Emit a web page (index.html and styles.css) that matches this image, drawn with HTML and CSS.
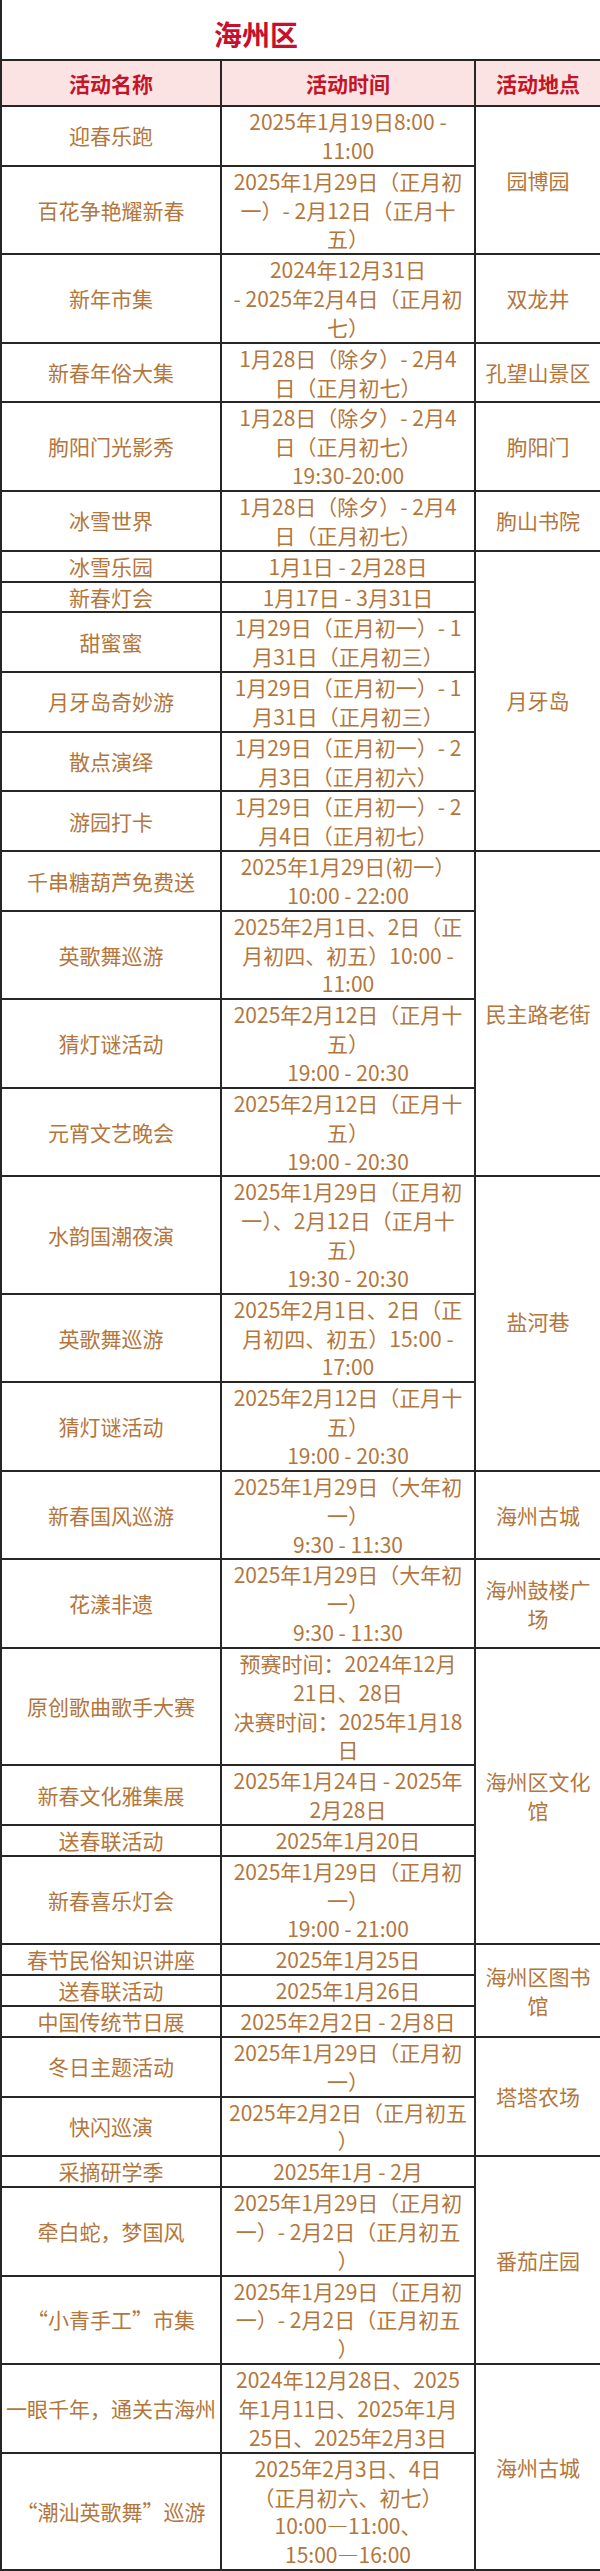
FILE: index.html
```html
<!DOCTYPE html>
<html lang="zh-CN">
<head>
<meta charset="utf-8">
<title>海州区</title>
<link rel="stylesheet" href="styles.css">
</head>
<body>
<table class="sched">
  <colgroup><col class="c-name"><col class="c-time"><col class="c-place"></colgroup>
  <tr class="title-row"><td colspan="3"><div class="title">海州区</div></td></tr>
  <tr class="head-row"><th>活动名称</th><th>活动时间</th><th>活动地点</th></tr>
  <tr><td>迎春乐跑</td><td>2025年1月19日8:00 -<br>11:00</td><td rowspan="2">园博园</td></tr>
  <tr><td>百花争艳耀新春</td><td>2025年1月29日（正月初<br>一）- 2月12日（正月十<br>五）</td></tr>
  <tr><td>新年市集</td><td>2024年12月31日<br>- 2025年2月4日（正月初<br>七）</td><td>双龙井</td></tr>
  <tr><td>新春年俗大集</td><td>1月28日（除夕）- 2月4<br>日（正月初七）</td><td>孔望山景区</td></tr>
  <tr><td>朐阳门光影秀</td><td>1月28日（除夕）- 2月4<br>日（正月初七）<br>19:30-20:00</td><td>朐阳门</td></tr>
  <tr><td>冰雪世界</td><td>1月28日（除夕）- 2月4<br>日（正月初七）</td><td>朐山书院</td></tr>
  <tr><td>冰雪乐园</td><td>1月1日 - 2月28日</td><td rowspan="6">月牙岛</td></tr>
  <tr><td>新春灯会</td><td>1月17日 - 3月31日</td></tr>
  <tr><td>甜蜜蜜</td><td>1月29日（正月初一）- 1<br>月31日（正月初三）</td></tr>
  <tr><td>月牙岛奇妙游</td><td>1月29日（正月初一）- 1<br>月31日（正月初三）</td></tr>
  <tr><td>散点演绎</td><td>1月29日（正月初一）- 2<br>月3日（正月初六）</td></tr>
  <tr><td>游园打卡</td><td>1月29日（正月初一）- 2<br>月4日（正月初七）</td></tr>
  <tr><td>千串糖葫芦免费送</td><td>2025年1月29日(初一）<br>10:00 - 22:00</td><td rowspan="4">民主路老街</td></tr>
  <tr><td>英歌舞巡游</td><td>2025年2月1日、2日（正<br>月初四、初五）10:00 -<br>11:00</td></tr>
  <tr><td>猜灯谜活动</td><td>2025年2月12日（正月十<br>五）<br>19:00 - 20:30</td></tr>
  <tr><td>元宵文艺晚会</td><td>2025年2月12日（正月十<br>五）<br>19:00 - 20:30</td></tr>
  <tr><td>水韵国潮夜演</td><td>2025年1月29日（正月初<br>一）、2月12日（正月十<br>五）<br>19:30 - 20:30</td><td rowspan="3" class="top">盐河巷</td></tr>
  <tr><td>英歌舞巡游</td><td>2025年2月1日、2日（正<br>月初四、初五）15:00 -<br>17:00</td></tr>
  <tr><td>猜灯谜活动</td><td>2025年2月12日（正月十<br>五）<br>19:00 - 20:30</td></tr>
  <tr><td>新春国风巡游</td><td>2025年1月29日（大年初<br>一）<br>9:30 - 11:30</td><td>海州古城</td></tr>
  <tr><td>花漾非遗</td><td>2025年1月29日（大年初<br>一）<br>9:30 - 11:30</td><td>海州鼓楼广<br>场</td></tr>
  <tr><td>原创歌曲歌手大赛</td><td>预赛时间：2024年12月<br>21日、28日<br>决赛时间：2025年1月18<br>日</td><td rowspan="4">海州区文化<br>馆</td></tr>
  <tr><td>新春文化雅集展</td><td>2025年1月24日 - 2025年<br>2月28日</td></tr>
  <tr><td>送春联活动</td><td>2025年1月20日</td></tr>
  <tr><td>新春喜乐灯会</td><td>2025年1月29日（正月初<br>一）<br>19:00 - 21:00</td></tr>
  <tr><td>春节民俗知识讲座</td><td>2025年1月25日</td><td rowspan="3">海州区图书<br>馆</td></tr>
  <tr><td>送春联活动</td><td>2025年1月26日</td></tr>
  <tr><td>中国传统节日展</td><td>2025年2月2日 - 2月8日</td></tr>
  <tr><td>冬日主题活动</td><td>2025年1月29日（正月初<br>一）</td><td rowspan="2">塔塔农场</td></tr>
  <tr><td>快闪巡演</td><td>2025年2月2日（正月初五<br>）</td></tr>
  <tr><td>采摘研学季</td><td>2025年1月 - 2月</td><td rowspan="3">番茄庄园</td></tr>
  <tr><td>牵白蛇，梦国风</td><td>2025年1月29日（正月初<br>一）- 2月2日（正月初五<br>）</td></tr>
  <tr><td>“小青手工”市集</td><td>2025年1月29日（正月初<br>一）- 2月2日（正月初五<br>）</td></tr>
  <tr><td>一眼千年，通关古海州</td><td>2024年12月28日、2025<br>年1月11日、2025年1月<br>25日、2025年2月3日</td><td rowspan="2">海州古城</td></tr>
  <tr><td>“潮汕英歌舞”巡游</td><td>2025年2月3日、4日<br>（正月初六、初七）<br>10:00—11:00、<br>15:00—16:00</td></tr>
</table>
<div class="next-table">
  <span class="tick t0"></span><span class="tick t1"></span><span class="tick t2"></span><span class="tick t3"></span>
</div>
</body>
</html>
```
FILE: styles.css
```css
html, body {
  margin: 0;
  padding: 0;
  background: #ffffff;
}

body {
  width: 600px;
  font-family: "Noto Sans CJK SC", "Noto Sans", sans-serif;
}

.sched {
  width: 600px;
  table-layout: fixed;
  border-collapse: collapse;
  font-size: 21px;
  line-height: 28.85px;
  color: #b3763c;
}

.c-name { width: 220px; }
.c-time { width: 254px; }
.c-place { width: 126px; }

.sched td,
.sched th {
  border: 2px solid #262626;
  padding: 0;
  text-align: center;
  vertical-align: middle;
  white-space: nowrap;
  overflow: hidden;
}

.title-row td {
  border-top: none;
  height: 59px;
}

.title {
  padding-right: 90px;
  padding-top: 8px;
  font-size: 28px;
  font-weight: bold;
  color: #c8102e;
  line-height: 40px;
}

.head-row th {
  height: 44px;
  background: #fbe3e3;
  color: #c41428;
  font-weight: bold;
  font-size: 21px;
}

.sched td.top {
  vertical-align: top;
  padding-top: 130px;
}

.next-table {
  position: relative;
  margin-top: 9px;
  height: 3px;
  border-top: 2px solid #262626;
}

.tick {
  position: absolute;
  top: 0;
  width: 2px;
  height: 3px;
  background: #262626;
}

.t0 { left: 0; }
.t1 { left: 219px; }
.t2 { left: 473px; }
.t3 { left: 598px; }
```
